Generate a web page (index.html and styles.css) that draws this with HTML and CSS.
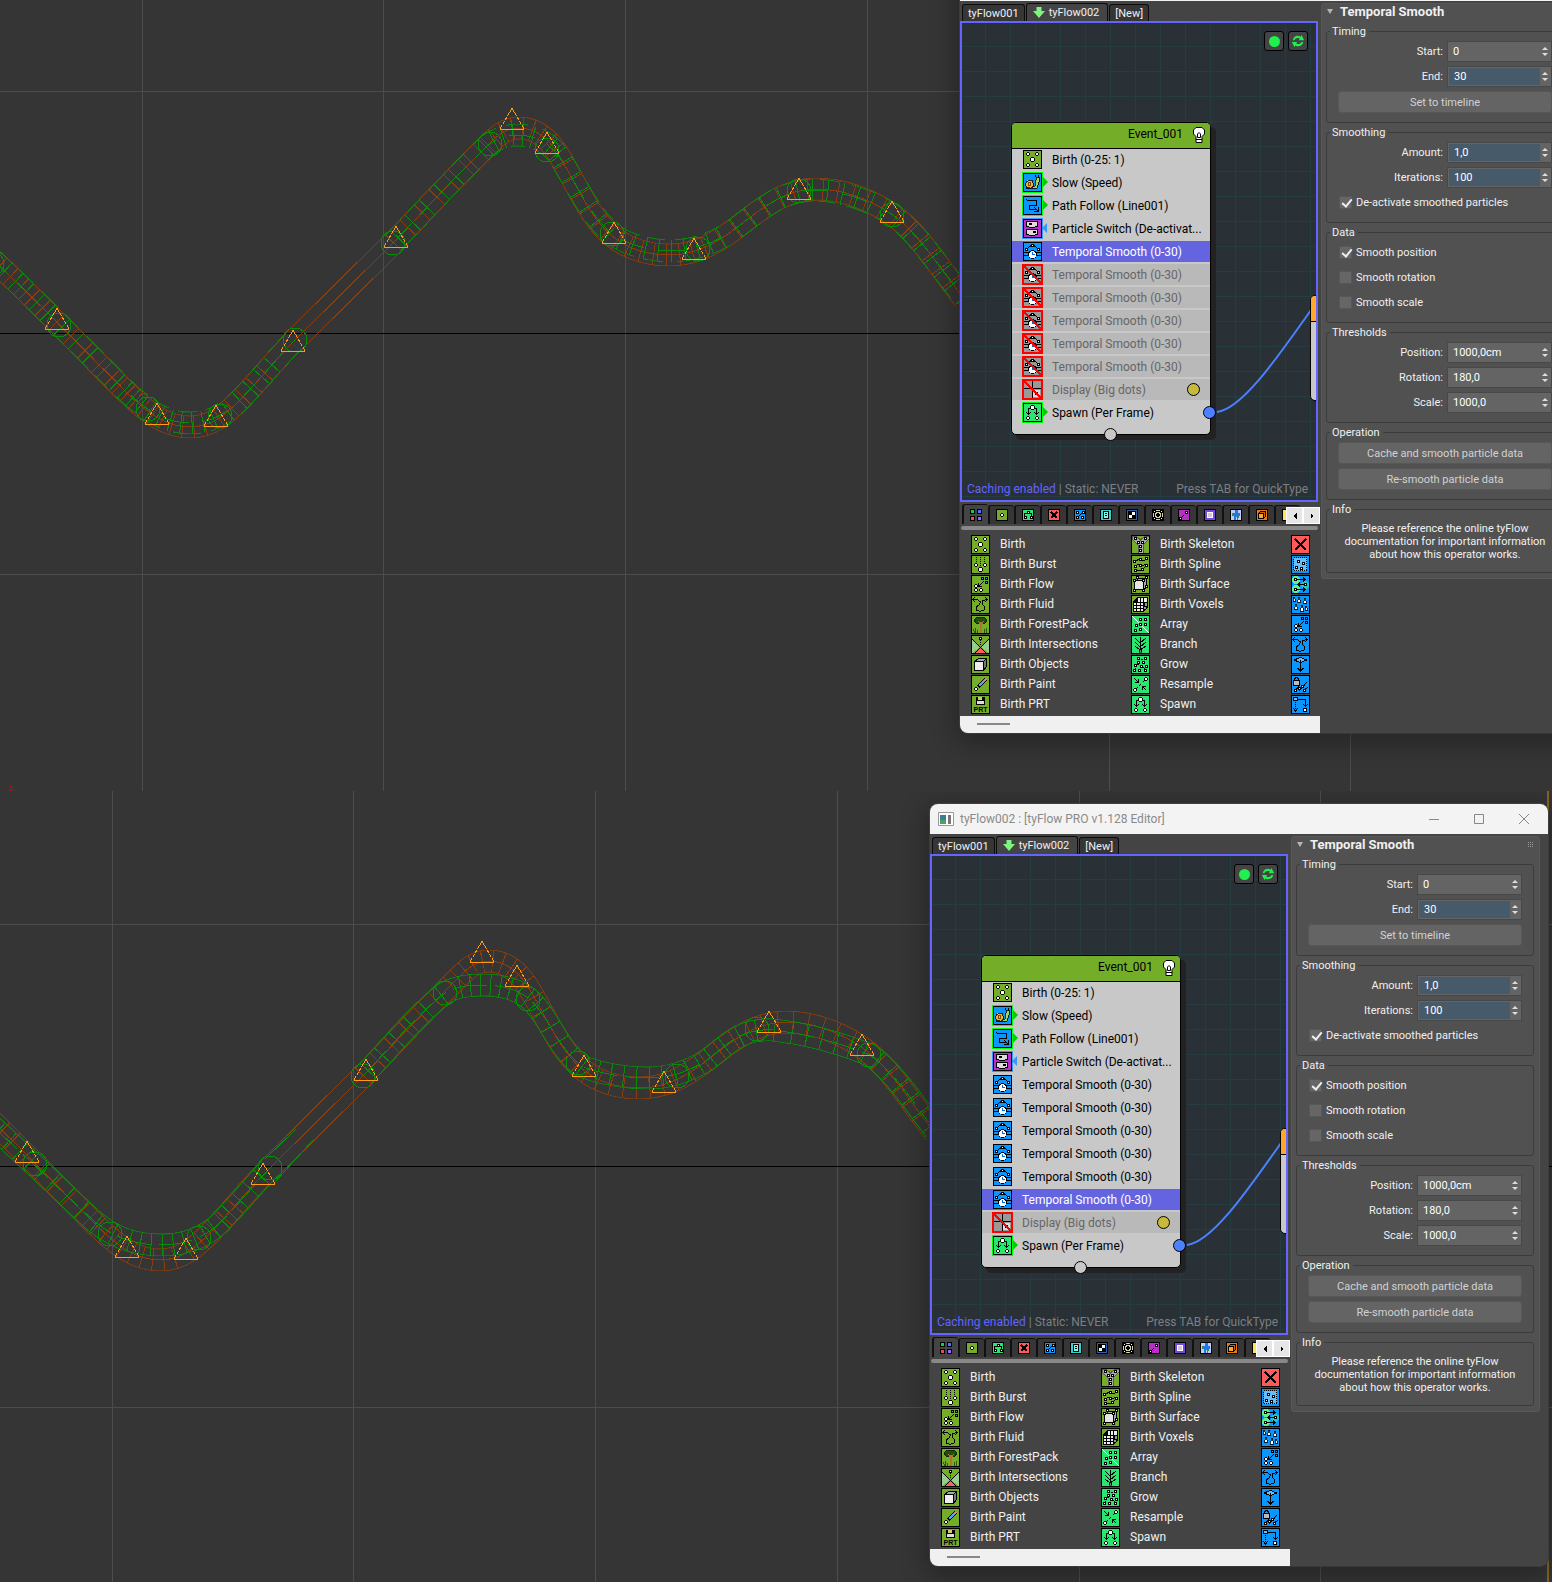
FILE: index.html
```
<!DOCTYPE html>
<html lang="en">
<head>
<meta charset="utf-8">
<title>tyFlow002 : [tyFlow PRO v1.128 Editor]</title>
<link rel="stylesheet" href="styles.css">
</head>
<body>
<svg class="defs" aria-hidden="true">
  <defs>
    <marker id="dot" markerUnits="userSpaceOnUse" markerWidth="4" markerHeight="4" refX="2" refY="2"><path d="M1 0h2v1h1v2h-1v1h-2v-1h-1v-2h1z"/><rect x="1" y="1" width="2" height="2" fill="#fff"/></marker>
    <marker id="sdot" markerUnits="userSpaceOnUse" markerWidth="3" markerHeight="3" refX="1.500" refY="1.500"><rect width="3" height="3"/><rect x="1" y="1" width="1" height="1" fill="#fff"/></marker>

    <path id="grid" d="M-100 91.500H3000M-100 574.500H3000M142.500 -100V2000M383.500 -100V2000M625.500 -100V2000M867.500 -100V2000M1109.500 -100V2000M1350.500 -100V2000" stroke="#4c4c4c"/>
    <path id="brownA" d="M-12 256C15 278 80 346 123 389C150 416 168 427 190 427C212 427 226 414 240 400C265 374 275 360 292 343"/>
    <path id="brownB" d="M393 243C420 215 455 177 490 143C500 133 508 128 519 128C537 128 550 140 560 157C578 187 590 218 612 236C628 249 648 255 669 255C694 255 712 245 728 234C755 215 778 190 815 189C843 189 870 200 890 213C920 233 938 267 965 300"/>
    <path id="green1A" d="M-12 256C15 278 80 346 123 388C150 414 168 423 190 423C212 423 226 413 240 400C265 374 275 360 295 340"/>
    <path id="green1B" d="M393 243C420 215 455 177 488 145C498 138 508 135 517 135C535 135 550 143 560 158C578 187 590 215 612 234C628 245 650 251 673 251C696 250 712 243 728 234C755 215 778 190 815 190C843 191 870 201 890 213C920 234 938 267 965 298"/>
    <path id="green2A" d="M22 293C60 327 90 357 125 389C145 405 165 412 192 412C215 412 235 404 250 390C270 369 280 357 300 335"/>
    <path id="green2B" d="M393 243C420 215 445 183 475 160C485 154 498 152 512 152C535 152 555 158 567 174C585 197 590 217 613 234C630 240 652 245 678 245C700 245 718 239 737 227C757 212 770 195 803 197C840 201 875 212 900 222C925 240 942 268 965 297"/>
    <g id="tri" fill="none" stroke="#ff9a14"><path d="M0 0L-12 21M0 0L12 21" stroke-dasharray="4 1"/><path d="M-12 21H12"/></g>
    <g id="keys">
      <use href="#tri" x="57" y="308"/><use href="#tri" x="157" y="403"/><use href="#tri" x="216" y="405"/><use href="#tri" x="293" y="330"/><use href="#tri" x="396" y="226"/><use href="#tri" x="512" y="108"/><use href="#tri" x="547" y="132"/><use href="#tri" x="614" y="222"/><use href="#tri" x="694" y="238"/><use href="#tri" x="799" y="178"/><use href="#tri" x="892" y="201"/>
    </g>
    <mask id="mBrown" maskUnits="userSpaceOnUse" x="-40" y="0" width="1100" height="600"><g fill="none" stroke="#fff" stroke-width="23"><use href="#brownA"/><use href="#brownB"/></g><g fill="none" stroke="#000" stroke-width="21"><use href="#brownA"/><use href="#brownB"/></g></mask>
    <mask id="mGreen1" maskUnits="userSpaceOnUse" x="-40" y="0" width="1100" height="600"><g fill="none" stroke="#fff" stroke-width="23"><use href="#green1A"/><use href="#green1B"/></g><g fill="none" stroke="#000" stroke-width="21"><use href="#green1A"/><use href="#green1B"/></g></mask>
    <mask id="mGreen2" maskUnits="userSpaceOnUse" x="-40" y="0" width="1100" height="600"><g fill="none" stroke="#fff" stroke-width="23"><use href="#green2A"/><use href="#green2B"/></g><g fill="none" stroke="#000" stroke-width="21"><use href="#green2A"/><use href="#green2B"/></g></mask>
    <g id="brownTube" fill="none" stroke="#8a3c0c">
      <g stroke-width="23" mask="url(#mBrown)"><use href="#brownA"/><use href="#brownB"/></g>
      <use class="rungs-a" href="#brownA"/><use class="rungs-b" href="#brownB"/>
      <use href="#brownA"/><use href="#brownB"/>
      <path d="M292 343L393 243M284 335L385 235M300 351L401 251"/>
    </g>

    <symbol id="birth" viewBox="0 0 17 17"><polyline class="dots" points="4,3 13,3 4,14 13,14"/><path d="M7 6h3v1h1v3h-1v1h-3v-1h-1v-3h1z"/><rect x="7" y="7" width="3" height="3" fill="#fff"/></symbol>
    <symbol id="burst" viewBox="0 0 17 17"><path class="ln" stroke-dasharray="1 1" d="M4.500 1V7M8.500 1V12M12.500 1V7"/><polyline class="dots" points="4,9 13,9"/><path d="M7 11h3v1h1v3h-1v1h-3v-1h-1v-3h1z"/><rect x="7" y="12" width="3" height="3" fill="#fff"/></symbol>
    <symbol id="flow" viewBox="0 0 17 17"><path class="ln" d="M12 5L7 10M6.500 7V10.500H10"/><polyline class="dots" points="4,10 4,14 9,14"/><path d="M9 1h3v3h-3zM13 1h3v3h-3zM13 5h3v3h-3z"/><path fill="#3c9cff" d="M10 2h1v1h-1zM14 2h1v1h-1zM14 6h1v1h-1z"/></symbol>
    <symbol id="fluid" viewBox="0 0 17 17"><path class="ln" d="M1.500 3.500H5L8.500 6L7 9L4 11L4.500 14L8 15.500L12 14L13 11L10 8L10.500 5L15 3M3 1L1 3.500L3 6M13 1L15.500 3.500L13 6"/></symbol>
    <symbol id="tree" viewBox="0 0 17 17"><path fill="#234f0c" stroke="#122d04" d="M5 1H12L15 4L13 7H4L2 4Z"/><path fill="#b5702a" d="M8 6h2v11h-2z"/><path class="ln" stroke="#2b5a0a" d="M1 13.500L3 17M3.500 12V17M5.500 14V17M12.500 13V17M14.500 12V17"/><path class="ln" stroke="#b5702a" d="M6 5L8.500 8M12 5L9.500 8"/></symbol>
    <symbol id="cross" viewBox="0 0 17 17"><path fill="#94d08c" d="M0 3L8 11L0 17zM17 3L9 11L17 17z"/><path fill="#ff6060" d="M8.500 11L13 17H4z"/><path class="ln" d="M0 3L14 17M17 3L3 17"/><path class="ln" stroke-dasharray="1 1" d="M8.500 4V9"/><polyline class="sdots" points="8.500,2.500"/></symbol>
    <symbol id="cube" viewBox="0 0 17 17"><path class="ln" fill="#aaa" d="M2.500 5.500L6.500 2.500H14.500V10.500L11.500 14.500"/><path class="ln" fill="#777" d="M11.500 5.500L14.500 2.500V10.500L11.500 14.500z"/><path class="ln" fill="#eee" d="M2.500 5.500h9v9h-9z"/></symbol>
    <symbol id="paint" viewBox="0 0 17 17"><path class="ln" stroke-width="4" d="M6 11L14 3"/><path class="ln" stroke="#59a6f5" stroke-width="2" d="M7 10L12 5"/><path class="ln" stroke="#eb7b78" stroke-width="2" d="M12 5L14 3"/><polyline class="dots" points="4,13"/></symbol>
    <symbol id="prt" viewBox="0 0 17 17"><path d="M4 1h9v8h-9z"/><path fill="#ddd" d="M5 5h7v3h-7z"/><path fill="#d7cb5a" d="M6 1h4v3h-4z"/><text x="8.500" y="16" font-size="7" font-weight="700" text-anchor="middle" font-family="Liberation Sans, sans-serif">PRT</text></symbol>
    <symbol id="skeleton" viewBox="0 0 17 17"><path fill="#aaa" stroke="#555" d="M0 0H4L8.500 4L13 0H17V3L11 9V17H6V9L0 3z"/><polyline class="sdots" points="3.500,2.500 13.500,2.500 6.500,6.500 10.500,6.500 8.500,10.500 8.500,14.500"/></symbol>
    <symbol id="spline" viewBox="0 0 17 17"><path class="ln" d="M3 6Q7 2 9 4T15 3M3 10Q7 8 9 9T14 8M4 14Q9 16 12 12T15 9"/><polyline class="sdots" points="2.500,5.500 8.500,3.500 14.500,2.500 3.500,10.500 8.500,9.500 3.500,14.500 10.500,13.500 14.500,9.500"/></symbol>
    <symbol id="surface" viewBox="0 0 17 17"><path class="ln" fill="#aaa" d="M3.500 5.500L6 2.500H14.500V11L12 13.500"/><path class="ln" fill="#e5e5e5" d="M2.500 4.500h9v9h-9z"/><polyline class="sdots" points="2.500,4.500 11.500,4.500 2.500,14.500 11.500,14.500 5.500,1.500 14.500,1.500 14.500,10.500"/></symbol>
    <symbol id="voxels" viewBox="0 0 17 17"><path d="M1 6L5 1H16V11L12 16H1z"/><path fill="#eee" d="M2 7h2v2h-2zM5 7h3v2h-3zM9 7h2v2h-2zM2 10h2v2h-2zM5 10h3v2h-3zM9 10h2v2h-2zM2 13h2v2h-2zM5 13h3v2h-3zM9 13h2v2h-2zM6 2h2v4h-2zM9 2h2v4h-2zM12 2h3v4h-3z"/><path fill="#999" d="M13 7h2v3h-2zM12 11h2v2h-2z"/></symbol>
    <symbol id="array" viewBox="0 0 17 17"><path class="ln" stroke="#fff" d="M0 0L17 17"/><polyline class="sdots" points="8.500,3.500 13.500,3.500 8.500,8.500 13.500,8.500 4.500,9.500 3.500,14.500 8.500,13.500"/></symbol>
    <symbol id="branch" viewBox="0 0 17 17"><path class="ln" d="M8.500 1V14M3 2L8 7L14 2M3 6L8 11L14 6M3 10L8 14L14 10"/><polyline class="sdots" points="8.500,15"/></symbol>
    <symbol id="grow" viewBox="0 0 17 17"><path class="ln" stroke-dasharray="2 1" d="M3 14L4 9L7 8L7 3H14M8 14L11 11L14 14M11 7L14 8"/><polyline class="sdots" points="2.500,14.500 3.500,9.500 6.500,6.500 6.500,2.500 13.500,2.500 11.500,6.500 14.500,10.500 9.500,10.500 13.500,14.500 7.500,14.500"/></symbol>
    <symbol id="resample" viewBox="0 0 17 17"><path class="ln" stroke-dasharray="1 1" d="M4 13L13 4"/><path class="ln" d="M2 2L6 6M6.500 3V6.500H3M14 14L10 10.500M10.500 14V10.500H14"/><polyline class="dots" points="14,3 3,14"/></symbol>
    <symbol id="spawn" viewBox="0 0 17 17"><path class="ln" d="M6 4.500H4.500V10M11 4.500H12.500V10M2.500 8.500L4.500 10.500L6.500 8.500M10.500 8.500L12.500 10.500L14.500 8.500"/><path d="M7 1h3v1h1v3h-1v1h-3v-1h-1v-3h1z"/><rect x="7" y="2" width="3" height="3" fill="#fff"/><polyline class="dots" points="4,14 13,14"/></symbol>
    <symbol id="xmark" viewBox="0 0 17 17"><path class="ln" stroke-width="2" d="M3 3L14 14M14 3L3 14"/></symbol>
    <symbol id="box" viewBox="0 0 17 17"><path fill="#62c0ff" d="M2 2h13v13h-13z"/><path class="ln" stroke-dasharray="1 1" d="M1.500 1.500h13v13h-13z"/><polyline class="sdots" points="6.500,5.500 11.500,7.500 4.500,11.500 9.500,12.500"/></symbol>
    <symbol id="cells" viewBox="0 0 17 17"><circle cx="4" cy="4" r="4" fill="#5df08e"/><circle cx="4" cy="13" r="4" fill="#5df08e"/><circle cx="13" cy="9" r="4" fill="#27c7c0"/><path class="ln" d="M5 3.500H13M11 1.500L13 3.500L11 5.500M5 13.500H13M11 11.500L13 13.500L11 15.500M12 8.500H6M8 6.500L6 8.500L8 10.500"/><polyline class="sdots" points="3.500,3.500 13.500,8.500 3.500,13.500"/></symbol>
    <symbol id="drops" viewBox="0 0 17 17"><path fill="#fff" stroke="#000" stroke-width=".8" d="M2 1L4 5H1zM7 1L9 6H5zM13 2L15 7H11zM4 8L6 13H2zM10 9L12 15H8zM14 10L16 14H13z"/></symbol>
    <symbol id="axis" viewBox="0 0 17 17"><path class="ln" fill="#62c0ff" d="M2 4L8.500 1.500L15 4L8.500 6.500z"/><path class="ln" d="M8.500 4V15M5.500 12L8.500 15L11.500 12"/></symbol>
    <symbol id="lock" viewBox="0 0 17 17"><path class="ln" d="M2.500 5V2.500L4.500 1.500L6.500 2.500V5M7 15L15 6M3 15L7 10M11 15L16 11"/><path class="ln" fill="#bbb" d="M1.500 4.500h6v5h-6z"/><polyline class="sdots" points="3.500,14.500 7.500,12.500 10.500,10.500 12.500,14.500"/></symbol>
    <symbol id="turn" viewBox="0 0 17 17"><path class="ln" d="M6 3.500H13.500V10M11.500 8.500L13.500 10.500L15.500 8.500"/><path class="ln" stroke-dasharray="1 1" d="M3.500 6V14"/><path class="ln" d="M1.500 12.500L3.500 15L5.500 12.500"/><path d="M1 1h5v4h-5z"/><path fill="#62c0ff" d="M2 2h3v2h-3z"/><path d="M11 12h4v4h-4z"/><path fill="#fff" d="M12 13h2v2h-2z"/></symbol>
    <symbol id="snail" viewBox="0 0 17 17"><path fill="#a5d858" stroke="#000" stroke-width=".8" d="M8 13L11 12V6H12V3H15V8L13 14H2z"/><circle cx="5.500" cy="10" r="4" fill="#f3b135" stroke="#000" stroke-width=".8"/><circle cx="5.500" cy="10" r="1.500" fill="none" stroke="#7a4b05"/><path class="ln" d="M12.500 4L11 1M14.500 4V1"/></symbol>
    <symbol id="path" viewBox="0 0 17 17"><path class="ln" d="M2.500 2.500L4 3.500H12.500V8.500H5.500V12.500H13M10 14.500H14.500V10M10 10L14 14"/></symbol>
    <symbol id="switch" viewBox="0 0 17 17"><rect x="2" y="1" width="12" height="6" rx="3" fill="#ddd" stroke="#000"/><rect x="2" y="9" width="12" height="6" rx="3" fill="#ddd" stroke="#000"/><path d="M5 3h3v2h-3zM9 11h3v2h-3z"/></symbol>
    <symbol id="smooth" viewBox="0 0 17 17"><path class="ln" d="M0 9.500H17M0 12.500H17M3 6L7 2.500H10L14 6"/><polyline class="sdots" points="2.500,6.500 8.500,2.500 14.500,6.500"/><circle cx="8.500" cy="11.500" r="4" fill="#fff" stroke="#000"/><path class="ln" stroke="#0a6fd0" d="M8.500 9V11.500H11"/></symbol>
    <symbol id="display" viewBox="0 0 17 17"><path class="ln" d="M8.500 0V17M0 7.500H17"/><rect x="9" y="9" width="7" height="7" fill="#ddd"/><polyline class="sdots" points="12.500,12.500"/></symbol>
    <symbol id="bulb" viewBox="0 0 14 18"><path fill="#fff" stroke="#000" d="M4 1.500H10L12.500 4V8L10 10.500V16.500H4V10.500L1.500 8V4z"/><path class="ln" d="M5.500 8L7 6.500L8.500 8V11.500H5.500zM4 13.500H10"/></symbol>
    <symbol id="arrows" viewBox="0 0 16 16"><path fill="#1ff04f" d="M2 7C3 2 8 1 11 3L12 1L15 7H9L10 5C7 4 5 5 4 7zM14 9C13 14 8 15 5 13L4 15L1 9H7L6 11C9 12 11 11 12 9z"/></symbol>
    <symbol id="down" viewBox="0 0 12 11"><path fill="#7cf67c" d="M3.500 0h5v4H12L6 11L0 4H3.500z"/></symbol>

    <symbol id="c-all" viewBox="0 0 12 12"><path d="M0 0h5v5h-5zM7 0h5v5h-5zM0 7h5v5h-5zM7 7h5v5h-5z"/><path fill="#0d2" d="M1 1h3v3h-3z"/><path fill="#47f" d="M8 1h3v3h-3z"/><path fill="#f44" d="M1 8h3v3h-3z"/><path fill="#96f" d="M8 8h3v3h-3z"/></symbol>
    <symbol id="c-dot" viewBox="0 0 10 10"><polyline class="dots" points="5,5"/></symbol>
    <symbol id="c-spawn" viewBox="0 0 10 10"><path class="ln" d="M1.500 6V3.500H8.500V6"/><polyline class="sdots" points="5.500,2.500 2.500,7.500 8.500,7.500"/></symbol>
    <symbol id="c-x" viewBox="0 0 10 10"><path class="ln" stroke-width="2" d="M2 2L8 8M8 2L2 8"/></symbol>
    <symbol id="c-blue" viewBox="0 0 10 10"><path class="ln" d="M2 8L8 2"/><polyline class="sdots" points="2.500,2.500 8.500,2.500 2.500,7.500 7.500,7.500"/></symbol>
    <symbol id="c-doc" viewBox="0 0 10 10"><path class="ln" fill="#7fe" d="M2.500 1.500h5v7h-5z"/><path class="ln" d="M4 3.500h2M4 5.500h2"/></symbol>
    <symbol id="c-check" viewBox="0 0 10 10"><path d="M1 1h8v8h-8z"/><path fill="#fff" d="M5 2h3v3h-3zM2 5h3v3h-3z"/></symbol>
    <symbol id="c-mesh" viewBox="0 0 10 10"><path class="ln" d="M1.500 1.500H8.500V8.500H1.500z"/><path class="ln" d="M3.500 5L5 3.500L6.500 5L5 6.500z"/><polyline class="sdots" points="1.500,1.500 8.500,1.500 1.500,8.500 8.500,8.500"/></symbol>
    <symbol id="c-link" viewBox="0 0 10 10"><path class="ln" stroke-dasharray="1 1" d="M3 7L7 3"/><polyline class="sdots" points="1.500,8.500 7.500,2.500"/></symbol>
    <symbol id="c-sq" viewBox="0 0 10 10"><path fill="#ccc" stroke="#fff" d="M2.500 2.500h5v5h-5z"/></symbol>
    <symbol id="c-man" viewBox="0 0 10 10"><path fill="#157ee0" d="M4 0h3v3h2v3H7v4H6V7H5v3H3V6H1V3h3z"/><path fill="#3c8b3c" d="M1 3h2v3h-2zM6 6h2v2h-2z"/></symbol>
    <symbol id="c-cube" viewBox="0 0 10 10"><path class="ln" fill="#c60" d="M1.500 3.500L3.500 1.500H8.500V6.500L6.500 8.500"/><path class="ln" fill="#fa2" d="M1.500 3.500h5v5h-5z"/></symbol>
    <path id="wire" d="M255 389C280 386 315 335 349 287" fill="none" stroke="#4b80ff" stroke-width="2"/>
  </defs>
</svg>

<main class="screen">
<section class="viewport">
  <svg class="scene" aria-hidden="true">
    <use href="#grid"/>
    <path d="M0 333.500H3000" stroke="#000"/>
    <use href="#brownTube"/>
    <g fill="none" stroke="#088c08">
      <g stroke-width="23" mask="url(#mGreen1)" stroke-dasharray="24 9 18 12"><use href="#green1A"/><use href="#green1B"/></g>
      <g stroke-dashoffset="-7"><use class="rungs-a" href="#green1A"/><use class="rungs-b" href="#green1B"/></g>
      <g stroke-dasharray="26 14"><use href="#green1A"/><use href="#green1B"/></g>
      <circle cx="-8" cy="264" r="12"/><circle cx="59" cy="325" r="12"/><circle cx="148" cy="409" r="12"/><circle cx="220" cy="416" r="12"/><circle cx="295" cy="340" r="12"/><circle cx="393" cy="243" r="12"/><circle cx="490" cy="144" r="12"/><circle cx="547" cy="150" r="12"/><circle cx="612" cy="234" r="12"/><circle cx="698" cy="249" r="12"/><circle cx="799" cy="191" r="12"/><circle cx="892" cy="215" r="12"/>
    </g>
    <use href="#keys"/>
    <path d="M9.500 786L14 791M14 786L9.500 791" stroke="#c00808"/>
  </svg>

  <article class="window window-top">
    <header class="titlebar"></header>
    <div class="client">
      <div class="editor">
        <nav class="tabs"><button>tyFlow001</button><button class="on"><svg><use href="#down"/></svg>tyFlow002</button><button>[New]</button></nav>
        <div class="canvas">
          <div class="tools"><button aria-label="Enable"><i></i></button><button aria-label="Refresh"><svg><use href="#arrows"/></svg></button></div>
          <svg class="wires" aria-hidden="true"><use href="#wire"/></svg>
          <div class="node event">
            <h2>Event_001<svg><use href="#bulb"/></svg></h2>
            <ul>
              <li><span class="ic olive"><svg><use href="#birth"/></svg></span>Birth (0-25: 1)</li>
              <li><span class="ic blue out"><svg><use href="#snail"/></svg></span>Slow (Speed)</li>
              <li><span class="ic blue out"><svg><use href="#path"/></svg></span>Path Follow (Line001)</li>
              <li><span class="ic magenta in"><svg><use href="#switch"/></svg></span>Particle Switch (De-activat...</li>
              <li class="sel"><span class="ic blue"><svg><use href="#smooth"/></svg></span>Temporal Smooth (0-30)</li>
              <li class="off"><span class="ic"><svg><use href="#smooth"/></svg></span>Temporal Smooth (0-30)</li>
              <li class="off"><span class="ic"><svg><use href="#smooth"/></svg></span>Temporal Smooth (0-30)</li>
              <li class="off"><span class="ic"><svg><use href="#smooth"/></svg></span>Temporal Smooth (0-30)</li>
              <li class="off"><span class="ic"><svg><use href="#smooth"/></svg></span>Temporal Smooth (0-30)</li>
              <li class="off"><span class="ic"><svg><use href="#smooth"/></svg></span>Temporal Smooth (0-30)</li>
              <li class="off"><span class="ic"><svg><use href="#display"/></svg></span>Display (Big dots)<i class="swatch"></i></li>
              <li><span class="ic mint out"><svg><use href="#spawn"/></svg></span>Spawn (Per Frame)<i class="port"></i></li>
            </ul>
            <i class="input-port"></i>
          </div>
          <div class="node next"><h2></h2></div>
          <footer class="status"><span><b>Caching enabled</b> | Static: NEVER</span><span>Press TAB for QuickType</span></footer>
        </div>
        <nav class="cats">
          <button class="on" aria-label="All"><svg class="plain"><use href="#c-all"/></svg></button><button aria-label="Birth"><svg class="olive"><use href="#c-dot"/></svg></button><button aria-label="Spawn"><svg class="mint"><use href="#c-spawn"/></svg></button><button aria-label="Delete"><svg class="red"><use href="#c-x"/></svg></button><button aria-label="Motion"><svg class="blue"><use href="#c-blue"/></svg></button><button aria-label="Shape"><svg class="teal"><use href="#c-doc"/></svg></button><button aria-label="Material"><svg class="navy"><use href="#c-check"/></svg></button><button aria-label="Mesh"><svg class="sand"><use href="#c-mesh"/></svg></button><button aria-label="Bindings"><svg class="magenta"><use href="#c-link"/></svg></button><button aria-label="Switch"><svg class="violet"><use href="#c-sq"/></svg></button><button aria-label="Actor"><svg class="pale"><use href="#c-man"/></svg></button><button aria-label="Objects"><svg class="orange"><use href="#c-cube"/></svg></button><button aria-label="Export"><svg class="yellow"></svg></button>
          <div class="scroll"><button aria-label="Left"><svg viewBox="0 0 8 8"><path d="M6 0V8L2 4z"/></svg></button><button aria-label="Right"><svg viewBox="0 0 8 8"><path d="M2 0V8L6 4z"/></svg></button></div>
        </nav>
        <div class="rule"></div>
        <ul class="depot">
          <li><span class="ic olive"><svg><use href="#birth"/></svg></span>Birth</li>
          <li><span class="ic olive"><svg><use href="#burst"/></svg></span>Birth Burst</li>
          <li><span class="ic olive"><svg><use href="#flow"/></svg></span>Birth Flow</li>
          <li><span class="ic olive"><svg><use href="#fluid"/></svg></span>Birth Fluid</li>
          <li><span class="ic olive"><svg><use href="#tree"/></svg></span>Birth ForestPack</li>
          <li><span class="ic olive"><svg><use href="#cross"/></svg></span>Birth Intersections</li>
          <li><span class="ic olive"><svg><use href="#cube"/></svg></span>Birth Objects</li>
          <li><span class="ic olive"><svg><use href="#paint"/></svg></span>Birth Paint</li>
          <li><span class="ic olive"><svg><use href="#prt"/></svg></span>Birth PRT</li>
          <li><span class="ic olive"><svg><use href="#skeleton"/></svg></span>Birth Skeleton</li>
          <li><span class="ic olive"><svg><use href="#spline"/></svg></span>Birth Spline</li>
          <li><span class="ic olive"><svg><use href="#surface"/></svg></span>Birth Surface</li>
          <li><span class="ic olive"><svg><use href="#voxels"/></svg></span>Birth Voxels</li>
          <li><span class="ic mint"><svg><use href="#array"/></svg></span>Array</li>
          <li><span class="ic mint"><svg><use href="#branch"/></svg></span>Branch</li>
          <li><span class="ic mint"><svg><use href="#grow"/></svg></span>Grow</li>
          <li><span class="ic mint"><svg><use href="#resample"/></svg></span>Resample</li>
          <li><span class="ic mint"><svg><use href="#spawn"/></svg></span>Spawn</li>
          <li><span class="ic red"><svg><use href="#xmark"/></svg></span></li>
          <li><span class="ic blue"><svg><use href="#box"/></svg></span></li>
          <li><span class="ic blue"><svg><use href="#cells"/></svg></span></li>
          <li><span class="ic blue"><svg><use href="#drops"/></svg></span></li>
          <li><span class="ic blue"><svg><use href="#flow"/></svg></span></li>
          <li><span class="ic blue"><svg><use href="#fluid"/></svg></span></li>
          <li><span class="ic blue"><svg><use href="#axis"/></svg></span></li>
          <li><span class="ic blue"><svg><use href="#lock"/></svg></span></li>
          <li><span class="ic blue"><svg><use href="#turn"/></svg></span></li>
        </ul>
        <div class="hscroll"><i></i></div>
      </div>
      <form class="rollout">
        <h3>Temporal Smooth<i class="grip"></i></h3>
        <fieldset><legend>Timing</legend>
          <label class="field">Start:<span class="spin"><input value="0"></span></label>
          <label class="field anim">End:<span class="spin"><input value="30"></span></label>
          <button type="button">Set to timeline</button>
        </fieldset>
        <fieldset><legend>Smoothing</legend>
          <label class="field anim">Amount:<span class="spin"><input value="1,0"></span></label>
          <label class="field anim">Iterations:<span class="spin"><input value="100"></span></label>
          <label class="tick"><input type="checkbox" checked>De-activate smoothed particles</label>
        </fieldset>
        <fieldset><legend>Data</legend>
          <label class="tick"><input type="checkbox" checked>Smooth position</label>
          <label class="tick"><input type="checkbox">Smooth rotation</label>
          <label class="tick"><input type="checkbox">Smooth scale</label>
        </fieldset>
        <fieldset><legend>Thresholds</legend>
          <label class="field">Position:<span class="spin"><input value="1000,0cm"></span></label>
          <label class="field">Rotation:<span class="spin"><input value="180,0"></span></label>
          <label class="field">Scale:<span class="spin"><input value="1000,0"></span></label>
        </fieldset>
        <fieldset><legend>Operation</legend>
          <button type="button">Cache and smooth particle data</button>
          <button type="button">Re-smooth particle data</button>
        </fieldset>
        <fieldset><legend>Info</legend>
          <p>Please reference the online tyFlow<br>documentation for important information<br>about how this operator works.</p>
        </fieldset>
      </form>
    </div>
  </article>
</section>

<section class="viewport">
  <svg class="scene" aria-hidden="true">
    <g transform="translate(-30 42)">
      <use href="#grid"/>
      <path d="M0 333.500H3000" stroke="#000"/>
      <use href="#brownTube"/>
      <g fill="none" stroke="#088c08">
        <g stroke-width="23" mask="url(#mGreen2)"><use href="#green2A"/><use href="#green2B"/></g>
        <g stroke-dashoffset="-7"><use class="rungs-a" href="#green2A"/><use class="rungs-b" href="#green2B"/></g>
        <g stroke-dasharray="34 8"><use href="#green2A"/><use href="#green2B"/></g>
        <path d="M295 326L326 296M305 349L343 307"/>
        <circle cx="65" cy="331" r="12"/><circle cx="140" cy="401" r="12"/><circle cx="229" cy="405" r="12"/><circle cx="300" cy="335" r="12"/><circle cx="393" cy="243" r="12"/><circle cx="475" cy="160" r="12"/><circle cx="558" cy="166" r="12"/><circle cx="608" cy="230" r="12"/><circle cx="707" cy="243" r="12"/><circle cx="787" cy="196" r="12"/><circle cx="899" cy="222" r="12"/>
      </g>
      <use href="#keys"/>
    </g>
  </svg>
  <i class="viewport-edge"></i>

  <article class="window window-bottom">
    <header class="titlebar">
      <svg class="app-icon" viewBox="0 0 16 14"><path fill="#fff" stroke="#999" d="M.5.5h15v13h-15z"/><path fill="#3a7f96" d="M2 3h6v9h-6z"/><path fill="#4ba06c" d="M2 8h6v4h-6z"/><path fill="#777" d="M10 3h3v9h-3z"/></svg>
      <span class="title">tyFlow002 : [tyFlow PRO v1.128 Editor]</span>
      <button class="cap" aria-label="Minimize"><svg viewBox="0 0 12 12"><path d="M1 6.500H11"/></svg></button>
      <button class="cap" aria-label="Maximize"><svg viewBox="0 0 12 12"><path d="M1.500 1.500h9v9h-9z"/></svg></button>
      <button class="cap" aria-label="Close"><svg viewBox="0 0 12 12"><path d="M1 1L11 11M11 1L1 11"/></svg></button>
    </header>
    <div class="client">
      <div class="editor">
        <nav class="tabs"><button>tyFlow001</button><button class="on"><svg><use href="#down"/></svg>tyFlow002</button><button>[New]</button></nav>
        <div class="canvas">
          <div class="tools"><button aria-label="Enable"><i></i></button><button aria-label="Refresh"><svg><use href="#arrows"/></svg></button></div>
          <svg class="wires" aria-hidden="true"><use href="#wire"/></svg>
          <div class="node event">
            <h2>Event_001<svg><use href="#bulb"/></svg></h2>
            <ul>
              <li><span class="ic olive"><svg><use href="#birth"/></svg></span>Birth (0-25: 1)</li>
              <li><span class="ic blue out"><svg><use href="#snail"/></svg></span>Slow (Speed)</li>
              <li><span class="ic blue out"><svg><use href="#path"/></svg></span>Path Follow (Line001)</li>
              <li><span class="ic magenta in"><svg><use href="#switch"/></svg></span>Particle Switch (De-activat...</li>
              <li><span class="ic blue"><svg><use href="#smooth"/></svg></span>Temporal Smooth (0-30)</li>
              <li><span class="ic blue"><svg><use href="#smooth"/></svg></span>Temporal Smooth (0-30)</li>
              <li><span class="ic blue"><svg><use href="#smooth"/></svg></span>Temporal Smooth (0-30)</li>
              <li><span class="ic blue"><svg><use href="#smooth"/></svg></span>Temporal Smooth (0-30)</li>
              <li><span class="ic blue"><svg><use href="#smooth"/></svg></span>Temporal Smooth (0-30)</li>
              <li class="sel"><span class="ic blue"><svg><use href="#smooth"/></svg></span>Temporal Smooth (0-30)</li>
              <li class="off"><span class="ic"><svg><use href="#display"/></svg></span>Display (Big dots)<i class="swatch"></i></li>
              <li><span class="ic mint out"><svg><use href="#spawn"/></svg></span>Spawn (Per Frame)<i class="port"></i></li>
            </ul>
            <i class="input-port"></i>
          </div>
          <div class="node next"><h2></h2></div>
          <footer class="status"><span><b>Caching enabled</b> | Static: NEVER</span><span>Press TAB for QuickType</span></footer>
        </div>
        <nav class="cats">
          <button class="on" aria-label="All"><svg class="plain"><use href="#c-all"/></svg></button><button aria-label="Birth"><svg class="olive"><use href="#c-dot"/></svg></button><button aria-label="Spawn"><svg class="mint"><use href="#c-spawn"/></svg></button><button aria-label="Delete"><svg class="red"><use href="#c-x"/></svg></button><button aria-label="Motion"><svg class="blue"><use href="#c-blue"/></svg></button><button aria-label="Shape"><svg class="teal"><use href="#c-doc"/></svg></button><button aria-label="Material"><svg class="navy"><use href="#c-check"/></svg></button><button aria-label="Mesh"><svg class="sand"><use href="#c-mesh"/></svg></button><button aria-label="Bindings"><svg class="magenta"><use href="#c-link"/></svg></button><button aria-label="Switch"><svg class="violet"><use href="#c-sq"/></svg></button><button aria-label="Actor"><svg class="pale"><use href="#c-man"/></svg></button><button aria-label="Objects"><svg class="orange"><use href="#c-cube"/></svg></button><button aria-label="Export"><svg class="yellow"></svg></button>
          <div class="scroll"><button aria-label="Left"><svg viewBox="0 0 8 8"><path d="M6 0V8L2 4z"/></svg></button><button aria-label="Right"><svg viewBox="0 0 8 8"><path d="M2 0V8L6 4z"/></svg></button></div>
        </nav>
        <div class="rule"></div>
        <ul class="depot">
          <li><span class="ic olive"><svg><use href="#birth"/></svg></span>Birth</li>
          <li><span class="ic olive"><svg><use href="#burst"/></svg></span>Birth Burst</li>
          <li><span class="ic olive"><svg><use href="#flow"/></svg></span>Birth Flow</li>
          <li><span class="ic olive"><svg><use href="#fluid"/></svg></span>Birth Fluid</li>
          <li><span class="ic olive"><svg><use href="#tree"/></svg></span>Birth ForestPack</li>
          <li><span class="ic olive"><svg><use href="#cross"/></svg></span>Birth Intersections</li>
          <li><span class="ic olive"><svg><use href="#cube"/></svg></span>Birth Objects</li>
          <li><span class="ic olive"><svg><use href="#paint"/></svg></span>Birth Paint</li>
          <li><span class="ic olive"><svg><use href="#prt"/></svg></span>Birth PRT</li>
          <li><span class="ic olive"><svg><use href="#skeleton"/></svg></span>Birth Skeleton</li>
          <li><span class="ic olive"><svg><use href="#spline"/></svg></span>Birth Spline</li>
          <li><span class="ic olive"><svg><use href="#surface"/></svg></span>Birth Surface</li>
          <li><span class="ic olive"><svg><use href="#voxels"/></svg></span>Birth Voxels</li>
          <li><span class="ic mint"><svg><use href="#array"/></svg></span>Array</li>
          <li><span class="ic mint"><svg><use href="#branch"/></svg></span>Branch</li>
          <li><span class="ic mint"><svg><use href="#grow"/></svg></span>Grow</li>
          <li><span class="ic mint"><svg><use href="#resample"/></svg></span>Resample</li>
          <li><span class="ic mint"><svg><use href="#spawn"/></svg></span>Spawn</li>
          <li><span class="ic red"><svg><use href="#xmark"/></svg></span></li>
          <li><span class="ic blue"><svg><use href="#box"/></svg></span></li>
          <li><span class="ic blue"><svg><use href="#cells"/></svg></span></li>
          <li><span class="ic blue"><svg><use href="#drops"/></svg></span></li>
          <li><span class="ic blue"><svg><use href="#flow"/></svg></span></li>
          <li><span class="ic blue"><svg><use href="#fluid"/></svg></span></li>
          <li><span class="ic blue"><svg><use href="#axis"/></svg></span></li>
          <li><span class="ic blue"><svg><use href="#lock"/></svg></span></li>
          <li><span class="ic blue"><svg><use href="#turn"/></svg></span></li>
        </ul>
        <div class="hscroll"><i></i></div>
      </div>
      <form class="rollout">
        <h3>Temporal Smooth<i class="grip"></i></h3>
        <fieldset><legend>Timing</legend>
          <label class="field">Start:<span class="spin"><input value="0"></span></label>
          <label class="field anim">End:<span class="spin"><input value="30"></span></label>
          <button type="button">Set to timeline</button>
        </fieldset>
        <fieldset><legend>Smoothing</legend>
          <label class="field anim">Amount:<span class="spin"><input value="1,0"></span></label>
          <label class="field anim">Iterations:<span class="spin"><input value="100"></span></label>
          <label class="tick"><input type="checkbox" checked>De-activate smoothed particles</label>
        </fieldset>
        <fieldset><legend>Data</legend>
          <label class="tick"><input type="checkbox" checked>Smooth position</label>
          <label class="tick"><input type="checkbox">Smooth rotation</label>
          <label class="tick"><input type="checkbox">Smooth scale</label>
        </fieldset>
        <fieldset><legend>Thresholds</legend>
          <label class="field">Position:<span class="spin"><input value="1000,0cm"></span></label>
          <label class="field">Rotation:<span class="spin"><input value="180,0"></span></label>
          <label class="field">Scale:<span class="spin"><input value="1000,0"></span></label>
        </fieldset>
        <fieldset><legend>Operation</legend>
          <button type="button">Cache and smooth particle data</button>
          <button type="button">Re-smooth particle data</button>
        </fieldset>
        <fieldset><legend>Info</legend>
          <p>Please reference the online tyFlow<br>documentation for important information<br>about how this operator works.</p>
        </fieldset>
      </form>
    </div>
  </article>
</section>
</main>
</body>
</html>
```
FILE: styles.css
```
* { box-sizing: border-box; }
body { margin: 0; background: #353535; font: 12px/16px Roboto, "Open Sans", sans-serif; color: #f0f0f0; }
h2, h3, ul, p { margin: 0; padding: 0; font-size: inherit; font-weight: inherit; }
ul { list-style: none; }
button { margin: 0; padding: 0; border: 0; font: inherit; color: inherit; background: none; }
i { font-style: normal; }
b { font-weight: inherit; }
svg { display: block; }
.defs { position: absolute; width: 0; height: 0; }

/* viewports */
.screen { display: grid; grid-template-rows: 1fr 1fr; min-height: 100vh; }
.viewport { position: relative; overflow: hidden; min-height: 780px; background: #353535; }
.scene { position: absolute; inset: 0; width: 100%; height: 100%; shape-rendering: crispEdges; }
.viewport-edge { position: absolute; top: 0; bottom: 0; right: 3px; width: 2px; background: #8a6519; }
.rungs-a, .rungs-b { stroke-width: 22px; }
.rungs-a { stroke-dasharray: 1 14 1 14 1 14 1 14 1 14 1 19 1 19 1 19 1 19 1 17 1 10 1 10 1 10 1 10 1 10 1 10 1 10 1 10 1 10 1 10 1 15 1 15 1 15 1 15 1 15 1 200; }
.rungs-b { stroke-dasharray: 1 20 1 20 1 20 1 20 1 20 1 20 1 9 1 9 1 9 1 9 1 9 1 9 1 9 1 9 1 9 1 16 1 16 1 16 1 16 1 16 1 12 1 12 1 12 1 12 1 12 1 12 1 12 1 12 1 12 1 17 1 17 1 17 1 17 1 17 1 14 1 14 1 14 1 14 1 14 1 14 1 16 1 16 1 16 1 16 1 16 1 16 1 16 1 200; }

/* floating editor window */
.window { position: absolute; width: 618px; display: flex; flex-direction: column; border-radius: 8px; background: #444; overflow: hidden; }
.window { box-shadow: 0 6px 26px 4px rgba(0, 0, 0, .3), 0 0 0 1px #4a4a4a; }
.window-top { right: -26px; top: -29px; }
.window-bottom { right: 4px; top: 13px; }
.titlebar { display: flex; align-items: center; height: 30px; padding-right: 2px; background: #f3f3f3; color: #8a8a8a; }
.app-icon { width: 16px; height: 14px; margin: 0 6px 0 8px; }
.title { flex: 1; }
.cap { display: grid; place-items: center; width: 45px; height: 30px; }
.cap svg { width: 12px; height: 12px; fill: none; stroke: #888; }
.client { display: flex; align-items: flex-start; }
.editor { flex: 0 0 360px; min-width: 0; }

.tabs { display: flex; align-items: flex-end; gap: 1px; height: 20px; padding-left: 2px; font-size: 11px; }
.tabs button { height: 17px; padding: 0 5px; line-height: 18px; white-space: nowrap; border: 1px solid #0c0c0c; border-width: 1px 1px 0; border-radius: 3px 3px 0 0; background: #363636; }
.tabs .on { display: flex; align-items: center; gap: 4px; height: 18px; padding: 0 8px 0 6px; background: #444; }
.tabs svg { width: 12px; height: 11px; }

/* node canvas */
.canvas { position: relative; width: 358px; height: 481px; overflow: hidden; border: 2px solid #6464ff; background: #293036; }
.canvas { background-image: linear-gradient(#243d40 1px, transparent 1px), linear-gradient(90deg, #243d40 1px, transparent 1px); background-size: 25px 25px; background-position: -2px -2px; }
.tools { position: absolute; top: 8px; right: 8px; display: flex; gap: 4px; }
.tools button { display: grid; place-items: center; width: 20px; height: 20px; border: 1px solid #000; border-radius: 3px; background: #444; }
.tools i { width: 11px; height: 11px; border-radius: 50%; background: #1ff04f; }
.tools svg { width: 14px; height: 16px; }
.wires { position: absolute; inset: 0; width: 100%; height: 100%; }
.status { position: absolute; left: 5px; right: 8px; bottom: 3px; display: flex; justify-content: space-between; color: #7c7f82; }
.status b { color: #6464ff; }
.node { position: absolute; width: 200px; border: 1px solid #000; border-radius: 5px; background: #c8c8c8; color: #000; box-shadow: 5px 5px 0 #222; }
.event { left: 49px; top: 99px; padding-bottom: 11px; }
.next { left: 348px; top: 272px; height: 106px; }
.node h2 { display: flex; align-items: center; justify-content: flex-end; gap: 9px; height: 26px; padding: 0 4px 4px 0; border-bottom: 1px solid #000; border-radius: 4px 4px 0 0; background: #74ae28; }
.next h2 { background: #ffa82a; }
.node h2 svg { width: 14px; height: 18px; margin-top: 2px; }
.node ul { display: grid; grid-auto-rows: 21px; gap: 2px; }
.node li { position: relative; display: flex; align-items: center; padding-left: 11px; white-space: nowrap; }
.node .ic { margin-right: 10px; }
.node .sel { background: #6464e0; color: #fff; }
.node .off { background: #b9b9b9; color: #666; }
.off .ic { background: #999; border-color: #f00; box-shadow: 0 0 0 1px #f00; }
.off .ic::after { content: ""; position: absolute; inset: 0; background: linear-gradient(45deg, transparent 47%, #f00 47%, #f00 53%, transparent 53%); }
.out { box-shadow: 0 0 0 1px #0f0; }
.out::after { content: ""; position: absolute; left: 19px; top: 3px; border: 5px solid transparent; border-left-color: #0c0; border-right-width: 0; }
.in { box-shadow: 0 0 0 1px #39f; }
.in::after { content: ""; position: absolute; left: 18px; top: 3px; border: 5px solid transparent; border-right-color: #39f; border-left-width: 0; }
.swatch, .port, .input-port { position: absolute; width: 13px; height: 13px; border: 1px solid #000; border-radius: 50%; background: #c8c8c8; }
.swatch { right: 10px; background: #c8b93c; }
.port { right: -6px; background: #4b80ff; }
.input-port { left: 92px; bottom: -7px; }

.ic { position: relative; flex: none; width: 19px; height: 19px; border: 1px solid #000; }
.ic svg { width: 17px; height: 17px; shape-rendering: crispEdges; }
.ln:not([stroke]) { stroke: #000; }
.ln:not([fill]) { fill: none; }
.dots { fill: none; marker: url(#dot); }
.sdots { fill: none; marker: url(#sdot); }
.olive { background: #74ae28; }
.mint { background: #28e66e; }
.blue { background: #0a96ff; }
.magenta { background: #b92dc8; }
.red { background: #ff5a5a; }
.teal { background: #32d2d2; }
.navy { background: #2864b4; }
.sand { background: #d7d2a5; }
.violet { background: #7846e6; }
.pale { background: #c8c8ff; }
.orange { background: #eb7814; }
.yellow { background: #ffe650; }

/* operator depot */
.cats { position: relative; display: flex; align-items: flex-end; height: 22px; padding-left: 2px; overflow: hidden; }
.cats > button { flex: none; display: grid; place-items: center; width: 26px; height: 19px; border: 2px solid #111; border-width: 1px 0 0 2px; border-radius: 3px 3px 0 0; background: #363636; }
.cats > .on { height: 20px; background: #444; }
.cats svg { width: 12px; height: 12px; border: 1px solid #000; shape-rendering: crispEdges; }
.cats .plain { border: 0; }
.scroll { position: absolute; right: 0; bottom: 0; display: flex; }
.scroll button { display: grid; place-items: center; width: 17px; height: 17px; border: 1px solid #fff; background: #e6e6e6; }
.cats .scroll svg { width: 6px; height: 6px; border: 0; }
.rule { height: 4px; margin: 2px 2px 4px 1px; border-radius: 2px; background: #888; }
.depot { display: grid; grid-auto-flow: column; grid-template-rows: repeat(9, 20px); grid-template-columns: 160px 160px 20px; padding: 0 0 2px 11px; }
.depot li { display: flex; align-items: center; gap: 10px; white-space: nowrap; }
.hscroll { height: 17px; padding: 7px 17px; background: #f0f0f0; }
.hscroll i { display: block; width: 33px; height: 2px; background: #888; }

/* parameter rollout */
.rollout { flex: 0 0 249px; margin: 2px 0 0 1px; padding: 0 5px 4px 4px; border: 1px solid #585858; border-radius: 3px; background: #515151; font-size: 11px; line-height: 13px; }
.rollout h3 { position: relative; height: 19px; padding-left: 14px; font-size: 13px; font-weight: 700; line-height: 16px; }
.rollout h3::before { content: ""; position: absolute; left: 1px; top: 5px; border: 3px solid transparent; border-top: 5px solid #b4b4b4; border-bottom: 0; }
.grip { position: absolute; right: 1px; top: 5px; width: 5px; height: 5px; background: linear-gradient(90deg, transparent 1px, #515151 1px) 0 0 / 2px 2px, linear-gradient(#999 1px, #515151 1px) 0 0 / 2px 2px; }
fieldset { display: grid; gap: 4px; min-width: 0; margin: 0 0 1px; padding: 2px 11px 9px 11px; border: 1px solid #3c3c3c; border-radius: 3px; }
legend { height: 16px; margin-left: -8px; padding: 0 3px 0 2px; line-height: 18px; }
fieldset button { height: 22px; border: 1px solid #575757; border-radius: 3px; background: #646464; color: #d2d2d2; }
fieldset p { padding: 3px 0 2px; text-align: center; margin: 0 -10px; }
.field { display: flex; align-items: center; justify-content: flex-end; gap: 4px; height: 21px; }
.spin { position: relative; width: 105px; height: 21px; border: 1px solid #484848; background: #646464; }
.spin::before, .spin::after { content: ""; position: absolute; right: 3px; border: 3px solid transparent; }
.spin::before { top: 5px; border-bottom: 3px solid #ddd; border-top: 0; }
.spin::after { bottom: 5px; border-top: 3px solid #ddd; border-bottom: 0; }
.spin input { display: block; width: 92px; height: 19px; padding: 0 5px; border: 0; background: transparent; font: inherit; color: #fff; }
.anim input { border: 1px solid #646464; border-width: 1px 0 1px 1px; background: #465a69; }
.tick { display: flex; align-items: center; gap: 4px; height: 21px; padding-left: 1px; white-space: nowrap; }
.tick input { appearance: none; position: relative; width: 13px; height: 13px; margin: 0; border: 1px solid #575757; background: #666; }
.tick input:checked::after { content: ""; position: absolute; left: 4px; top: 0; width: 4px; height: 8px; border: solid #eee; border-width: 0 2px 2px 0; transform: rotate(40deg); }
```
